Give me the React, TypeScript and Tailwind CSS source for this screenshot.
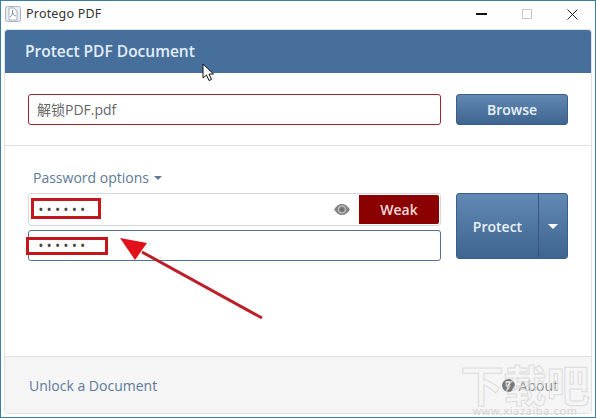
const font = "[font-family:'Open_Sans','Noto_Sans_CJK_SC',sans-serif]"

function AppIcon() {
  return (
    <svg width="16" height="16" viewBox="0 0 16 16" className="shrink-0">
      <rect x="0.5" y="0.5" width="15" height="15" rx="2" fill="#e9eef3" stroke="#a9b4bf" />
      <path d="M4 2h5l3 3v9H4z" fill="#fff" stroke="#8a97a5" strokeWidth="0.7" />
      <path d="M5 11c2-1 3-4 2.5-6.5C7 7 8.5 9.5 11 10" fill="none" stroke="#5d7fa3" strokeWidth="0.8" />
    </svg>
  )
}

function TitleBar() {
  return (
    <div className="flex h-[26px] items-center pl-[4px] pr-[17px]">
      <AppIcon />
      <span className="ml-[5px] text-[12.5px] tracking-[0.2px] text-[#333] [font-family:'Noto_Sans',sans-serif]">Protego PDF</span>
      <div className="ml-auto flex items-center">
        <div className="h-[1.5px] w-[11px] bg-[#111]" />
        <div className="ml-[35px] h-[10px] w-[10px] border border-[#c8c8c8]" />
        <svg width="11" height="11" viewBox="0 0 11 11" className="ml-[35px]">
          <path d="M0.5 0.5l10 10M10.5 0.5l-10 10" stroke="#222" strokeWidth="1" />
        </svg>
      </div>
    </div>
  )
}

function BlueButton({ label }: { label: string }) {
  return (
    <button className="h-[31px] w-[112px] rounded-[3px] border border-[#3c5f85] bg-gradient-to-b from-[#6289b3] to-[#3d658f] text-[14px] font-semibold text-[#eaf1f8]">
      {label}
    </button>
  )
}

function EyeIcon() {
  return (
    <svg width="16" height="11" viewBox="0 0 16 11" className="ml-auto mr-[9px]">
      <path d="M0 5.5C2.5 1.5 5 0 8 0s5.5 1.5 8 5.5C13.5 9.5 11 11 8 11S2.5 9.5 0 5.5z" fill="#858585" />
      <circle cx="8" cy="5.5" r="3.6" fill="none" stroke="#d8d8d8" strokeWidth="0.9" />
      <circle cx="8" cy="5.5" r="2" fill="#6f6f6f" />
    </svg>
  )
}

function Dots() {
  return <span className="text-[10px] font-bold tracking-[4.6px] text-[#444]">••••••</span>
}

function Annotations() {
  return (
    <>
      <div className="absolute left-[31px] top-[198px] h-[21px] w-[70px] border-[3px] border-[#c3171d]" />
      <div className="absolute left-[26px] top-[237px] h-[18px] w-[82px] border-[3px] border-[#c3171d]" />
      <svg className="absolute left-[110px] top-[230px]" width="160" height="95" viewBox="0 0 160 95">
        <path d="M152 88L32 22" stroke="#b9202a" strokeWidth="3" />
        <path d="M10 8L37 13L25 30z" fill="#e0111a" />
      </svg>
      <svg className="absolute left-[202px] top-[63px]" width="13" height="19" viewBox="0 0 13 19">
        <path d="M1 1v14l3.5-3 2.5 5.5 2.5-1-2.5-5.5h4.5z" fill="#fff" stroke="#111" strokeWidth="1" />
      </svg>
    </>
  )
}

function Watermark() {
  return (
    <div className="pointer-events-none absolute bottom-0 right-[5px] flex w-[130px] flex-col items-center overflow-hidden whitespace-nowrap">
      <span className="text-[43px] font-bold leading-[43px] text-transparent [-webkit-text-stroke:1px_#dcdcdc] [font-family:'Noto_Sans_CJK_SC',sans-serif]">下载吧</span>
      <span className="text-[11px] leading-[12px] tracking-[0.6px] text-[#d4d4d4] [font-family:'Noto_Sans',sans-serif]">www.xiazaiba.com</span>
    </div>
  )
}

export default function App() {
  return (
    <div className={`relative flex h-[418px] w-[596px] flex-col overflow-hidden border border-[#3a80a3] bg-white ${font}`}>
      <TitleBar />
      <div className="mx-[3px] mb-[3px] mt-[2px] flex flex-1 flex-col rounded-[3px] border border-[#dfe3e6]">
        <div className="flex h-[43px] items-center rounded-t-[3px] bg-[#466f9c] px-[20px]">
          <h1 className="text-[15.5px] font-semibold text-[#e4eef8]">Protect PDF Document</h1>
        </div>

        <div className="flex h-[73px] items-start gap-[15px] border-b border-[#dfe1e3] px-[23px] pt-[21px]">
          <div className="flex h-[31px] w-[413px] items-center rounded-[3px] border border-[#a3242c] px-[8px] text-[14px] text-[#666]">
            解锁PDF.pdf
          </div>
          <BlueButton label="Browse" />
        </div>

        <div className="flex flex-1 flex-col px-[23px] pt-[20px]">
          <div className="flex h-[22px] items-center gap-[5px] pl-[5px] text-[14px] text-[#5d7a99]">
            Password options
            <span className="mt-[2px] border-x-[4px] border-t-[4px] border-x-transparent border-t-[#5d7a99]" />
          </div>
          <div className="mt-[5px] flex gap-[15px]">
            <div className="flex w-[413px] flex-col gap-[4px]">
              <div className="flex h-[33px] items-center rounded-[3px] border border-[#d8d8d8] pl-[10px] pr-px">
                <Dots />
                <EyeIcon />
                <div className="flex h-[29px] w-[80px] items-center justify-center rounded-r-[2px] bg-[#8b0000] text-[14px] font-semibold text-[#f3dcdc]">Weak</div>
              </div>
              <div className="flex h-[31px] items-center rounded-[3px] border border-[#54738f] pl-[10px]">
                <Dots />
              </div>
            </div>
            <div className="flex h-[66px] w-[112px] rounded-[3px] border border-[#3c5f85] bg-gradient-to-b from-[#6289b3] to-[#3d658f] text-[#eaf1f8]">
              <div className="flex w-[82px] items-center justify-center border-r border-[#35587c] text-[14px] font-semibold">Protect</div>
              <div className="flex flex-1 items-center justify-center">
                <span className="border-x-[5px] border-t-[5px] border-x-transparent border-t-white" />
              </div>
            </div>
          </div>
        </div>

        <div className="flex h-[57px] items-center justify-between border-t border-[#dcdedf] bg-[#f5f5f6] pl-[24px] pr-[33px] text-[14px] text-[#5d7a99]">
          <span>Unlock a Document</span>
          <span className="flex items-center gap-[4px] text-[#8a8a8a]">
            <span className="flex h-[13px] w-[13px] items-center justify-center rounded-full bg-[#777] text-[10px] font-bold text-white">?</span>
            About
          </span>
        </div>
      </div>
      <Watermark />
      <div className="absolute -left-px -top-px">
        <Annotations />
      </div>
    </div>
  )
}
